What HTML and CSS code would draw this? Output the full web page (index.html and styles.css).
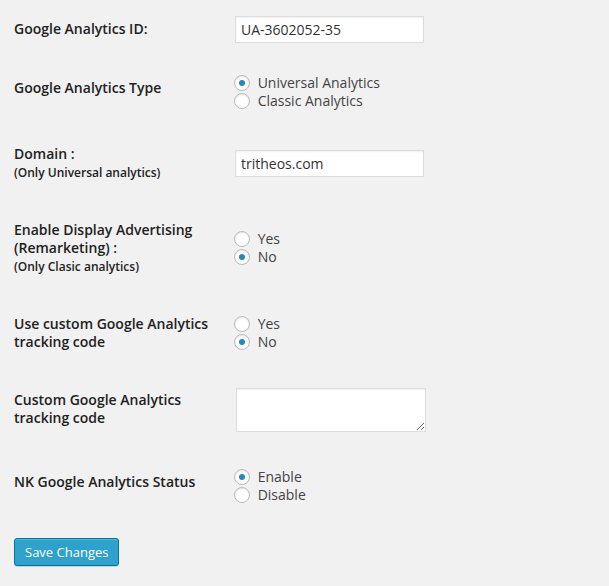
FILE: index.html
```html
<!DOCTYPE html>
<html>
<head>
<meta charset="utf-8">
<link rel="stylesheet" href="styles.css">
</head>
<body>
<div class="wrap">
  <table class="form-table">
    <tr>
      <th>Google Analytics ID:</th>
      <td><input class="text-field" type="text" value="UA-3602052-35"></td>
    </tr>
    <tr>
      <th>Google Analytics Type</th>
      <td>
        <label class="radio-line"><input class="radio" type="radio" name="type" checked> Universal Analytics</label>
        <label class="radio-line"><input class="radio" type="radio" name="type"> Classic Analytics</label>
      </td>
    </tr>
    <tr>
      <th>Domain :<br><span class="note">(Only Universal analytics)</span></th>
      <td><input class="text-field" type="text" value="tritheos.com"></td>
    </tr>
    <tr>
      <th>Enable Display Advertising (Remarketing) :<br><span class="note">(Only Clasic analytics)</span></th>
      <td>
        <label class="radio-line"><input class="radio" type="radio" name="adv"> Yes</label>
        <label class="radio-line"><input class="radio" type="radio" name="adv" checked> No</label>
      </td>
    </tr>
    <tr>
      <th>Use custom Google Analytics tracking code</th>
      <td>
        <label class="radio-line"><input class="radio" type="radio" name="custom"> Yes</label>
        <label class="radio-line"><input class="radio" type="radio" name="custom" checked> No</label>
      </td>
    </tr>
    <tr>
      <th>Custom Google Analytics tracking code</th>
      <td><textarea class="code-area"></textarea></td>
    </tr>
    <tr>
      <th>NK Google Analytics Status</th>
      <td>
        <label class="radio-line"><input class="radio" type="radio" name="status" checked> Enable</label>
        <label class="radio-line"><input class="radio" type="radio" name="status"> Disable</label>
      </td>
    </tr>
  </table>
  <p class="submit"><button class="button-primary" type="button">Save Changes</button></p>
</div>
</body>
</html>
```
FILE: styles.css
```css
html, body {
  margin: 0;
  padding: 0;
  background: #f1f1f1;
}
body {
  font-family: "Open Sans", "Liberation Sans", sans-serif;
  font-size: 14px;
  color: #444;
  width: 609px;
  height: 586px;
  overflow: hidden;
}
.wrap {
  padding-left: 14px;
}
.form-table {
  border-collapse: collapse;
  border-spacing: 0;
}
.form-table th {
  width: 200px;
  padding: 20px 10px 20px 0;
  text-align: left;
  vertical-align: top;
  font-weight: 600;
  font-size: 14px;
  line-height: 18px;
  color: #222;
}
.form-table th .note {
  font-size: 12px;
  font-weight: 600;
  line-height: 14px;
}
.form-table td {
  padding: 15px 10px;
  vertical-align: middle;
  font-size: 14px;
  line-height: 18px;
}
.text-field {
  box-sizing: border-box;
  display: block;
  width: 189px;
  height: 27px;
  margin: 1px;
  padding: 3px 5px;
  border: 1px solid #ddd;
  background: #fff;
  box-shadow: inset 0 1px 2px rgba(0,0,0,.07);
  font-family: "Open Sans", "Liberation Sans", sans-serif;
  font-size: 14px;
  color: #333;
  outline: none;
}
.code-area {
  box-sizing: border-box;
  display: block;
  width: 190px;
  height: 44px;
  margin: 2px 0 6px 2px;
  padding: 3px 5px;
  border: 1px solid #ddd;
  background: #fff;
  box-shadow: inset 0 1px 2px rgba(0,0,0,.07);
  resize: both;
  outline: none;
}
.radio-line {
  display: block;
  height: 18px;
  line-height: 18px;
  white-space: nowrap;
}
.radio {
  -webkit-appearance: none;
  appearance: none;
  box-sizing: border-box;
  display: inline-block;
  position: relative;
  width: 16px;
  height: 16px;
  margin: 0 4px 0 0;
  padding: 0;
  border: 1px solid #bbb;
  border-radius: 50%;
  background: #fff;
  box-shadow: inset 0 1px 2px rgba(0,0,0,.1);
  vertical-align: -3px;
  outline: none;
}
.radio:checked::before {
  content: "";
  position: absolute;
  left: 4px;
  top: 4px;
  width: 6px;
  height: 6px;
  border-radius: 50%;
  background: #1e8cbe;
}
.submit {
  margin: 0;
  padding: 19px 0 0 0;
}
.button-primary {
  box-sizing: border-box;
  display: block;
  height: 28px;
  padding: 0 10px 1px;
  border: 1px solid #0074a2;
  border-radius: 3px;
  background: #2ea2cc;
  box-shadow: inset 0 1px 0 rgba(120,200,230,.5), 0 1px 0 rgba(0,0,0,.15);
  color: #fff;
  font-family: "Open Sans", "Liberation Sans", sans-serif;
  font-size: 13px;
  line-height: 26px;
  cursor: pointer;
}
```
